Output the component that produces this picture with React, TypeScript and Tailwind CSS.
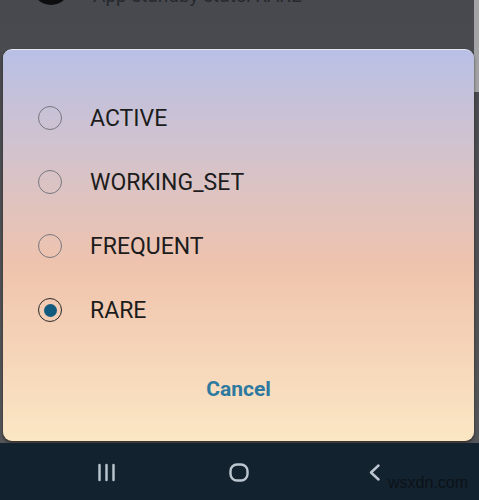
const options = ["ACTIVE", "WORKING_SET", "FREQUENT", "RARE"];
const selected = "RARE";

const RadioRow = ({ label, checked }: { label: string; checked: boolean }) => (
    <div className="flex h-16 items-center pl-[35px]">
        <span
            className={
                checked
                    ? "flex h-6 w-6 items-center justify-center rounded-full border-[1.5px] border-[#2a2a2a]"
                    : "flex h-6 w-6 items-center justify-center rounded-full border-[1.5px] border-[#77777f]"
            }
        >
            {checked && <span className="h-[13px] w-[13px] rounded-full bg-[#135a7f]" />}
        </span>
        <span className="ml-7 text-[23px] leading-none text-[#1c1c1c]">{label}</span>
    </div>
);

export default function App() {
    return (
        <div
            className="relative flex h-[500px] w-[479px] flex-col overflow-hidden bg-gradient-to-b from-[#47494e] to-[#55575b]"
            style={{ fontFamily: "Roboto, 'Noto Sans', sans-serif" }}
        >
            {/* list row behind the dialog, cut off at the top */}
            <div className="flex h-[49px] shrink-0 items-start">
                <div className="-mt-[35px] ml-[32px] h-10 w-[38px] rounded-full bg-[#0d0d0f]" />
                <span className="-mt-[14px] ml-[23px] text-[19px] leading-5 text-[#25282d]">App standby state: RARE</span>
                <div className="ml-auto h-[92px] w-[5px] bg-[#a3a3a6]" />
            </div>

            {/* dialog */}
            <div className="ml-[3px] mr-[5px] flex h-[392px] shrink-0 flex-col rounded-[9px] border-t border-[#e8e8f0] bg-gradient-to-b from-[#b8c0e6] via-[#efc3ad] via-55% to-[#fbe7c4] shadow-[0_2px_3px_rgba(40,30,20,0.7)]">
                <div className="pt-9">
                    {options.map((o) => (
                        <RadioRow key={o} label={o} checked={o === selected} />
                    ))}
                </div>
                <div className="mt-6 flex h-12 items-center justify-center">
                    <span className="text-[21px] font-bold text-[#2d79a0]">Cancel</span>
                </div>
            </div>

            {/* navigation bar */}
            <div className="mt-[2px] flex flex-1 items-center bg-[#13222f] pt-[2px]">
                <div className="flex w-[160px] justify-end pr-[44px]">
                    <svg width="19" height="19" viewBox="0 0 19 19" fill="none" stroke="#bcc6d0" strokeWidth="2.4" strokeLinecap="round">
                        <path d="M2.5 2v15M9.5 2v15M16.5 2v15" />
                    </svg>
                </div>
                <div className="flex flex-1 justify-center pr-[2px]">
                    <svg width="20" height="19" viewBox="0 0 20 19" fill="none" stroke="#bcc6d0" strokeWidth="2.4">
                        <rect x="1.5" y="1.5" width="17" height="16" rx="6.5" />
                    </svg>
                </div>
                <div className="flex w-[160px] justify-start pl-[49px]">
                    <svg width="13" height="17" viewBox="0 0 13 17" fill="none" stroke="#bcc6d0" strokeWidth="2.4" strokeLinecap="round" strokeLinejoin="round">
                        <path d="M10.5 1.5L3 8.5l7.5 7" />
                    </svg>
                </div>
            </div>
            <span className="absolute bottom-[7px] right-[11px] text-[16px] leading-5 text-[#0b1218]" style={{ fontFamily: "'Liberation Sans', sans-serif" }}>
                wsxdn.com
            </span>
        </div>
    );
}
